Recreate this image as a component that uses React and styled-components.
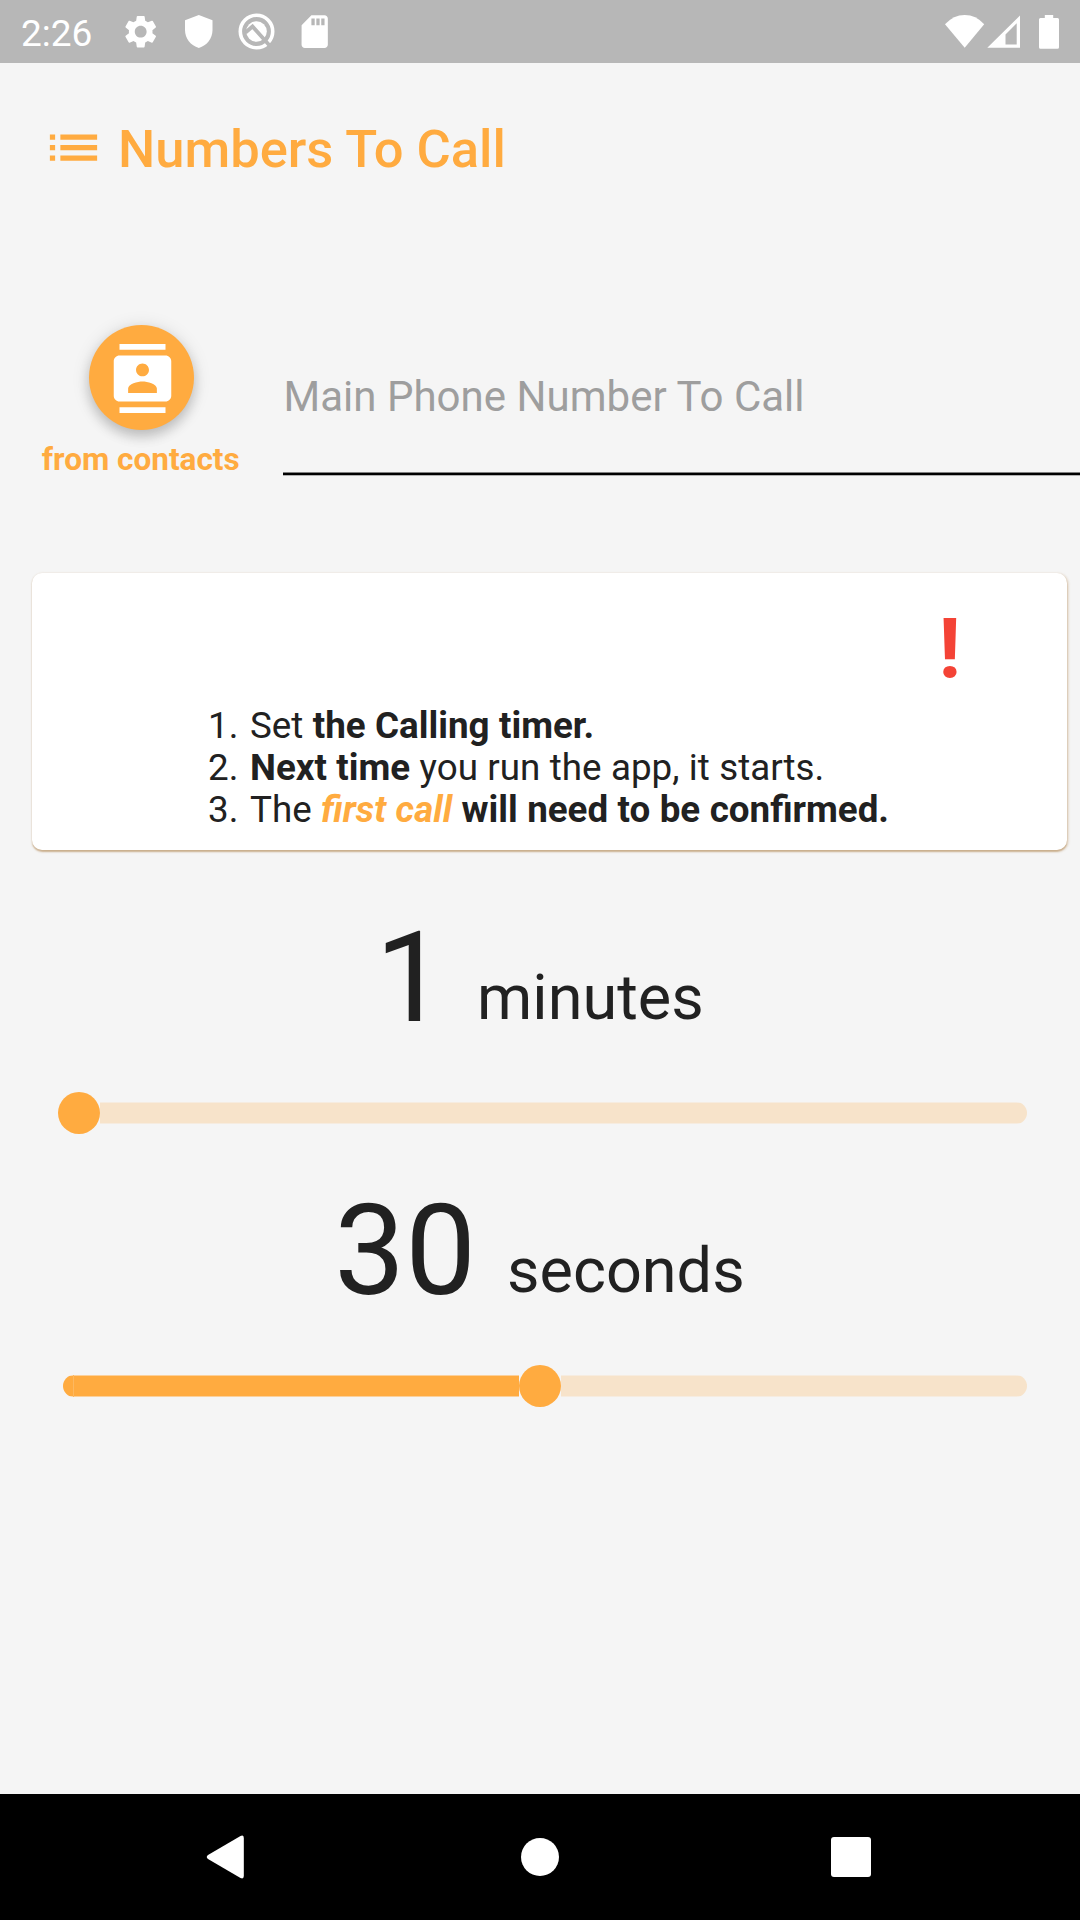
import React from "react";
import styled, { createGlobalStyle } from "styled-components";
import { MdSettings, MdSdCard } from "react-icons/md";

const accent = "#ffab40";

const GlobalStyle = createGlobalStyle`
  * { box-sizing: border-box; }
  body { margin: 0; background: #f5f5f5; }
`;

const Screen = styled.div`
  display: flex;
  flex-direction: column;
  width: 1080px;
  height: 1920px;
  overflow: hidden;
  background: #f5f5f5;
  color: #212121;
  font-family: Roboto, "Liberation Sans", sans-serif;
`;

const StatusBar = styled.header`
  display: flex;
  align-items: center;
  justify-content: space-between;
  height: 63px;
  flex: none;
  padding: 0 20px 0 21px;
  background: #b7b7b7;
  color: #fff;
`;

const StatusGroup = styled.div`
  display: flex;
  align-items: center;
  gap: ${(p) => p.$gap}px;
`;

const Clock = styled.span`
  width: 80.5px;
  font-size: 37px;
  line-height: 44px;
  padding-top: 4px;
`;

const StatusIcon = styled.svg`
  display: block;
  width: ${(p) => p.$w}px;
  height: ${(p) => p.$h}px;
`;

const Content = styled.main`
  display: flex;
  flex-direction: column;
  flex: 1;
`;

const TitleBar = styled.div`
  display: flex;
  align-items: center;
  gap: 13px;
  height: 169px;
  padding-left: 42px;
  color: ${accent};
`;

const Title = styled.h1`
  margin: 0;
  padding-top: 3px;
  font-size: 52.5px;
  font-weight: 500;
  line-height: 62px;
  white-space: nowrap;
`;

const Glyph = styled.svg`
  display: block;
  flex: none;
  width: ${(p) => p.$size}px;
  height: ${(p) => p.$size}px;
  fill: currentColor;
`;

const PhoneRow = styled.section`
  display: flex;
  align-items: flex-start;
  height: 340px;
  padding: 93px 0 0 42px;
`;

const Picker = styled.div`
  display: flex;
  flex-direction: column;
  align-items: center;
  width: 199px;
  margin-right: 42px;
`;

const RoundButton = styled.button`
  display: flex;
  align-items: center;
  justify-content: center;
  width: 105px;
  height: 105px;
  padding: 1px 0 0 1px;
  border: 0;
  border-radius: 50%;
  background: ${accent};
  color: #fff;
  box-shadow: 0 7px 12px rgba(0, 0, 0, 0.16), 0 2px 18px rgba(0, 0, 0, 0.13);
`;

const PickerLabel = styled.span`
  margin: 11px 1.5px 0 0;
  color: ${accent};
  font-size: 31.5px;
  font-weight: 700;
  line-height: 37px;
  white-space: nowrap;
`;

const Field = styled.div`
  flex: 1;
  padding-top: 47px;
`;

const Placeholder = styled.div`
  height: 100px;
  padding-left: 0.5px;
  color: #9e9e9e;
  font-size: 42px;
  line-height: 49px;
  white-space: nowrap;
  word-spacing: 0.15px;
`;

const Underline = styled.div`
  height: 4px;
  background: linear-gradient(#808080 1px, #000 1px 3px, #b0b0b0 3px);
`;

const Card = styled.section`
  display: flex;
  flex-direction: column;
  height: 277px;
  margin: 1px 13px 54px 32px;
  padding: 27px 0 20px;
  border-radius: 10px;
  background: #fff;
  box-shadow: 0 1.5px 1.5px rgba(180, 140, 90, 0.5), 1px 1px 3px rgba(180, 130, 70, 0.4);
`;

const Alert = styled.div`
  align-self: flex-end;
  margin: 0 106px 7px 0;
  color: #f44336;
  font-size: 84px;
  font-weight: 700;
  line-height: 98px;
`;

const Steps = styled.ol`
  display: grid;
  grid-template-columns: 42px auto;
  justify-content: start;
  margin: 0;
  padding: 0 0 0 176px;
  list-style: none;
  font-size: 36.75px;
  line-height: 42px;
  white-space: nowrap;
  word-spacing: 0.3px;
`;

const Step = styled.li`
  display: contents;
`;

const Strong = styled.strong`
  font-weight: 700;
`;

const Accent = styled.em`
  color: ${accent};
`;

const Timer = styled.section`
  height: 273px;
`;

const Reading = styled.div`
  display: flex;
  align-items: flex-end;
  justify-content: center;
  gap: 31px;
  height: 148px;
  padding-right: 1px;
`;

const Amount = styled.span`
  font-size: 126px;
  line-height: 148px;
`;

const Unit = styled.span`
  margin-bottom: 17.5px;
  font-size: 63px;
  line-height: 74px;
`;

const Slider = styled.div`
  display: flex;
  align-items: center;
  height: 122px;
  padding: 0 53px 0 58px;
`;

const Filled = styled.div`
  display: flex;
  width: 456px;
  height: 22px;
  margin-left: 5px;
  border-radius: 11px 0 0 11px;
  background: linear-gradient(#fbd09b 1px, ${accent} 1px 21px, #fbd09b 21px);
`;

const Seam = styled.i`
  width: 1px;
  margin-left: 10px;
  background: #fdb860;
`;

const Thumb = styled.div`
  width: 42px;
  height: 42px;
  border-radius: 50%;
  background: ${accent};
`;

const Rest = styled.div`
  flex: 1;
  height: 22px;
  border-radius: 0 11px 11px 0;
  background: linear-gradient(#f6ece0 1px, #f7e3ca 1px 21px, #f6ece0 21px);
`;

const NavBar = styled.nav`
  display: grid;
  grid-template-columns: 450px 180px 1fr;
  align-items: center;
  height: 126px;
  flex: none;
  background: #000;
`;

const NavButton = styled.div`
  display: flex;
  justify-content: center;
  padding-right: ${(p) => p.$inset || 0}px;
`;

function TimerControl({ amount, unit, filled }) {
  return (
    <Timer>
      <Reading>
        <Amount>{amount}</Amount>
        <Unit>{unit}</Unit>
      </Reading>
      <Slider>
        {filled && (
          <Filled>
            <Seam />
          </Filled>
        )}
        <Thumb />
        <Rest />
      </Slider>
    </Timer>
  );
}

export default function App() {
  return (
    <Screen>
      <GlobalStyle />
      <StatusBar>
        <StatusGroup $gap={19}>
          <Clock>2:26</Clock>
          <MdSettings size={39.4} />
          <StatusIcon $w={39} $h={39} viewBox="0 0 39 39">
            <path d="M19.8 3 L33.5 8.2 V18 C33.5 26.5 28 33.5 19.8 36 C11.6 33.5 6 26.5 6 18 V8.2 Z" fill="#fff" />
          </StatusIcon>
          <StatusIcon $w={39} $h={39} viewBox="0 0 39 39">
            <circle cx="19.5" cy="19.5" r="16.2" fill="none" stroke="#fff" strokeWidth="3.6" />
            <circle cx="19.5" cy="19.5" r="10.3" fill="#fff" />
            <path d="M8.5 20.5 L15.5 14.5 L33 34" fill="none" stroke="#b7b7b7" strokeWidth="3.8" />
          </StatusIcon>
          <MdSdCard size={39.4} />
        </StatusGroup>
        <StatusGroup $gap={0}>
          <StatusIcon $w={116} $h={36} viewBox="944 13 116 36">
            <path d="M964.7 46.7 L945 23.3 Q953.5 14 964.7 14 Q976 14 984.2 23.3 Z" fill="#fff" />
            <path
              fillRule="evenodd"
              d="M987.3 46.8 L1020 14.5 V46.8 Z M1005.5 33.5 V43.5 H1016.7 V22.3 Z"
              fill="#fff"
            />
            <path
              d="M1044.8 14 H1053.2 V17 H1057.5 Q1059 17 1059 18.5 V46.3 Q1059 47.8 1057.5 47.8 H1040.5 Q1039 47.8 1039 46.3 V18.5 Q1039 17 1040.5 17 H1044.8 Z"
              fill="#fff"
            />
          </StatusIcon>
        </StatusGroup>
      </StatusBar>

      <Content>
        <TitleBar>
          <Glyph $size={63} viewBox="0 0 24 24">
            <path d="M3 13h2v-2H3v2zm0 4h2v-2H3v2zm0-8h2V7H3v2zm4 4h14v-2H7v2zm0 4h14v-2H7v2zM7 7v2h14V7H7z" />
          </Glyph>
          <Title>Numbers To Call</Title>
        </TitleBar>

        <PhoneRow>
          <Picker>
            <RoundButton aria-label="from contacts">
              <Glyph $size={69} viewBox="0 0 24 24">
                <path d="M20 0H4v2h16V0zM4 24h16v-2H4v2zM20 4H4c-1.1 0-2 .9-2 2v12c0 1.1.9 2 2 2h16c1.1 0 2-.9 2-2V6c0-1.1-.9-2-2-2zm-8 2.75c1.24 0 2.25 1.01 2.25 2.25s-1.01 2.25-2.25 2.25S9.75 10.24 9.75 9 10.76 6.75 12 6.75zM17 17H7v-1.5c0-1.67 3.33-2.5 5-2.5s5 .83 5 2.5V17z" />
              </Glyph>
            </RoundButton>
            <PickerLabel>from contacts</PickerLabel>
          </Picker>
          <Field>
            <Placeholder>Main Phone Number To Call</Placeholder>
            <Underline />
          </Field>
        </PhoneRow>

        <Card>
          <Alert>!</Alert>
          <Steps>
            <Step>
              <span>1.</span>
              <span>Set <Strong>the Calling timer.</Strong></span>
            </Step>
            <Step>
              <span>2.</span>
              <span><Strong>Next time</Strong> you run the app, it starts.</span>
            </Step>
            <Step>
              <span>3.</span>
              <span>The <Strong><Accent>first call</Accent> will need to be confirmed.</Strong></span>
            </Step>
          </Steps>
        </Card>

        <TimerControl amount="1" unit="minutes" />
        <TimerControl amount="30" unit="seconds" filled />
      </Content>

      <NavBar>
        <NavButton>
          <StatusIcon $w={38} $h={44} viewBox="0 0 38 44">
            <path d="M34.5 1 Q37.8 -0.5 37.8 3 V41 Q37.8 44.5 34.5 43 L2 24 Q-0.5 22 2 20 Z" fill="#fff" />
          </StatusIcon>
        </NavButton>
        <NavButton>
          <StatusIcon $w={38} $h={38} viewBox="0 0 38 38">
            <circle cx="19" cy="19" r="19" fill="#fff" />
          </StatusIcon>
        </NavButton>
        <NavButton $inset={8}>
          <StatusIcon $w={40} $h={40} viewBox="0 0 40 40">
            <rect width="40" height="40" rx="3" fill="#fff" />
          </StatusIcon>
        </NavButton>
      </NavBar>
    </Screen>
  );
}
